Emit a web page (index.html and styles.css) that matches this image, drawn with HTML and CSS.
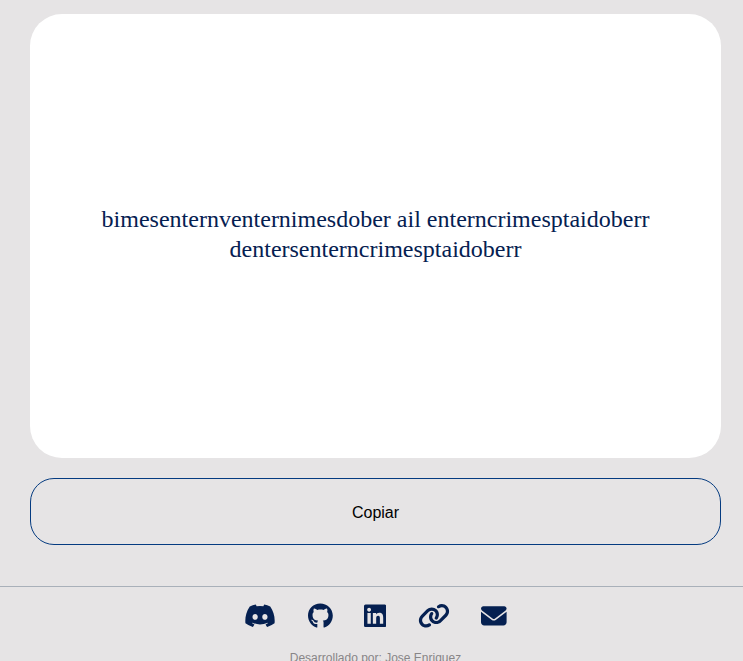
FILE: index.html
```html
<!DOCTYPE html>
<html lang="es">
<head>
<meta charset="utf-8">
<title>Encriptador</title>
<link rel="stylesheet" href="styles.css">
</head>
<body>
<main class="output">
  <section class="output__card">
    <p class="output__text">bimesenternventernimesdober ail enterncrimesptaidoberr dentersenterncrimesptaidoberr</p>
  </section>
  <button class="output__copy" type="button">Copiar</button>
</main>
<footer class="footer">
  <nav class="footer__links">
    <svg class="icon icon--wide" viewBox="0 0 640 512"><path d="M524.531,69.836a1.5,1.5,0,0,0-.764-.7A485.065,485.065,0,0,0,404.081,32.03a1.816,1.816,0,0,0-1.923.91,337.461,337.461,0,0,0-14.9,30.6,447.848,447.848,0,0,0-134.426,0,309.541,309.541,0,0,0-15.135-30.6,1.89,1.89,0,0,0-1.924-.91A483.689,483.689,0,0,0,116.085,69.137a1.712,1.712,0,0,0-.788.676C39.068,183.651,18.186,294.69,28.43,404.354a2.016,2.016,0,0,0,.765,1.375A487.666,487.666,0,0,0,176.02,479.918a1.9,1.9,0,0,0,2.063-.676A348.2,348.2,0,0,0,208.12,430.4a1.86,1.86,0,0,0-1.019-2.588,321.173,321.173,0,0,1-45.868-21.853,1.885,1.885,0,0,1-.185-3.126c3.082-2.309,6.166-4.711,9.109-7.137a1.819,1.819,0,0,1,1.9-.256c96.229,43.917,200.41,43.917,295.5,0a1.812,1.812,0,0,1,1.924.233c2.944,2.426,6.027,4.851,9.132,7.16a1.884,1.884,0,0,1-.162,3.126,301.407,301.407,0,0,1-45.89,21.83,1.875,1.875,0,0,0-1,2.611,391.055,391.055,0,0,0,30.014,48.815,1.864,1.864,0,0,0,2.063.7A486.048,486.048,0,0,0,610.7,405.729a1.882,1.882,0,0,0,.765-1.352C623.729,277.594,590.933,167.465,524.531,69.836ZM222.491,337.58c-28.972,0-52.844-26.587-52.844-59.239S193.056,219.1,222.491,219.1c29.665,0,53.306,26.82,52.843,59.239C275.334,310.993,251.924,337.58,222.491,337.58Zm195.38,0c-28.971,0-52.843-26.587-52.843-59.239S388.437,219.1,417.871,219.1c29.667,0,53.307,26.82,52.844,59.239C470.715,310.993,447.538,337.58,417.871,337.58Z"/></svg>
    <svg class="icon icon--github" viewBox="0 0 496 512"><path d="M165.9 397.4c0 2-2.3 3.6-5.2 3.6-3.3.3-5.6-1.3-5.6-3.6 0-2 2.3-3.6 5.2-3.6 3-.3 5.6 1.3 5.6 3.6zm-31.1-4.5c-.7 2 1.3 4.3 4.3 4.9 2.6 1 5.6 0 6.2-2s-1.3-4.3-4.3-5.2c-2.6-.7-5.5.3-6.2 2.3zm44.2-1.7c-2.9.7-4.9 2.6-4.6 4.9.3 2 2.9 3.3 5.9 2.6 2.9-.7 4.9-2.6 4.6-4.6-.3-1.9-3-3.2-5.9-2.9zM244.8 8C106.1 8 0 113.3 0 252c0 110.9 69.8 205.8 169.5 239.2 12.8 2.3 17.3-5.6 17.3-12.1 0-6.2-.3-40.4-.3-61.4 0 0-70 15-84.7-29.8 0 0-11.4-29.1-27.8-36.6 0 0-22.9-15.7 1.6-15.4 0 0 24.9 2 38.6 25.8 21.9 38.6 58.6 27.5 72.9 20.9 2.3-16 8.8-27.1 16-33.7-55.9-6.2-112.3-14.3-112.3-110.5 0-27.5 7.6-41.3 23.6-58.9-2.6-6.5-11.1-33.3 2.6-67.9 20.9-6.5 69 27 69 27 20-5.6 41.5-8.5 62.8-8.5s42.8 2.9 62.8 8.5c0 0 48.1-33.6 69-27 13.7 34.7 5.2 61.4 2.6 67.9 16 17.7 25.8 31.5 25.8 58.9 0 96.5-58.9 104.2-114.8 110.5 9.2 7.9 17 22.9 17 46.4 0 33.7-.3 75.4-.3 83.6 0 6.5 4.6 14.4 17.3 12.1C428.2 457.8 496 362.9 496 252 496 113.3 383.5 8 244.8 8z"/></svg>
    <svg class="icon icon--linkedin" viewBox="0 0 448 512"><path d="M416 32H31.9C14.3 32 0 46.5 0 64.3v383.4C0 465.5 14.3 480 31.9 480H416c17.6 0 32-14.5 32-32.3V64.3c0-17.8-14.4-32.3-32-32.3zM135.4 416H69V202.2h66.5V416zm-33.2-243c-21.3 0-38.5-17.3-38.5-38.5S80.9 96 102.2 96c21.2 0 38.5 17.3 38.5 38.5 0 21.3-17.2 38.5-38.5 38.5zm282.1 243h-66.4V312c0-24.8-.5-56.7-34.5-56.7-34.6 0-39.9 27-39.9 54.9V416h-66.4V202.2h63.7v29.2h.9c8.9-16.8 30.6-34.5 62.9-34.5 67.2 0 79.7 44.3 79.7 101.9V416z"/></svg>
    <svg class="icon icon--wide" viewBox="0 0 640 512"><path d="M579.8 267.7c56.5-56.5 56.5-148 0-204.5c-50-50-128.8-56.5-186.3-15.4l-1.6 1.1c-14.4 10.3-17.7 30.3-7.4 44.6s30.3 17.7 44.6 7.4l1.6-1.1c32.1-22.9 76-19.3 103.8 8.6c31.5 31.5 31.5 82.5 0 114L422.3 334.8c-31.5 31.5-82.5 31.5-114 0c-27.9-27.9-31.5-71.8-8.6-103.8l1.1-1.6c10.3-14.4 6.9-34.4-7.4-44.6s-34.4-6.9-44.6 7.4l-1.1 1.6C206.5 251.2 213 330 263 380c56.5 56.5 148 56.5 204.5 0L579.8 267.7zM60.2 244.3c-56.5 56.5-56.5 148 0 204.5c50 50 128.8 56.5 186.3 15.4l1.6-1.1c14.4-10.3 17.7-30.3 7.4-44.6s-30.3-17.7-44.6-7.4l-1.6 1.1c-32.1 22.9-76 19.3-103.8-8.6C74 372 74 321 105.5 289.5L217.7 177.2c31.5-31.5 82.5-31.5 114 0c27.9 27.9 31.5 71.8 8.6 103.9l-1.1 1.6c-10.3 14.4-6.9 34.4 7.4 44.6s34.4 6.9 44.6-7.4l1.1-1.6C433.5 260.8 427 182 377 132c-56.5-56.5-148-56.5-204.5 0L60.2 244.3z"/></svg>
    <svg class="icon icon--mail" viewBox="0 0 512 512"><path d="M48 64C21.5 64 0 85.5 0 112c0 15.1 7.1 29.3 19.2 38.4L236.8 313.6c11.4 8.5 27 8.5 38.4 0L492.8 150.4c12.1-9.1 19.2-23.3 19.2-38.4c0-26.5-21.5-48-48-48H48zM0 176V384c0 35.3 28.7 64 64 64H448c35.3 0 64-28.7 64-64V176L294.4 339.2c-22.8 17.1-54 17.1-76.8 0L0 176z"/></svg>
  </nav>
  <p class="footer__credit">Desarrollado por: Jose Enriquez</p>
</footer>
</body>
</html>
```
FILE: styles.css
```css
* {
  box-sizing: border-box;
}

body {
  margin: 0;
  height: 661px;
  overflow: hidden;
  background: #e6e4e5;
  color: #052051;
}

.output {
  display: flex;
  flex-direction: column;
  gap: 20px;
  padding: 14px 22px 41px 30px;
}

.output__card {
  display: flex;
  align-items: center;
  justify-content: center;
  height: 444px;
  padding: 0 32px 4px;
  border-radius: 32px;
  background: #fff;
}

.output__text {
  margin: 0;
  font: 24px/30px "Liberation Serif", "Times New Roman", serif;
  text-align: center;
}

.output__copy {
  height: 67px;
  padding: 2px 0 0;
  border: 1px solid #053b80;
  border-radius: 24px;
  background: transparent;
  color: #000;
  font: 16px "Liberation Sans", Arial, sans-serif;
}

.footer {
  padding: 16px 22px 0 30px;
  border-top: 1px solid #a9b0b9;
}

.footer__links {
  display: flex;
  justify-content: center;
  gap: 31.4px;
}

.icon {
  flex: none;
  height: 25.6px;
  fill: #052051;
}

.icon--wide {
  width: 32px;
}

.icon--github {
  width: 24.8px;
}

.icon--linkedin {
  width: 22.4px;
}

.icon--mail {
  width: 25.6px;
}

.footer__credit {
  margin: 22px 0 0;
  color: #888587;
  font: 12px/14px "Liberation Sans", Arial, sans-serif;
  text-align: center;
}
```
